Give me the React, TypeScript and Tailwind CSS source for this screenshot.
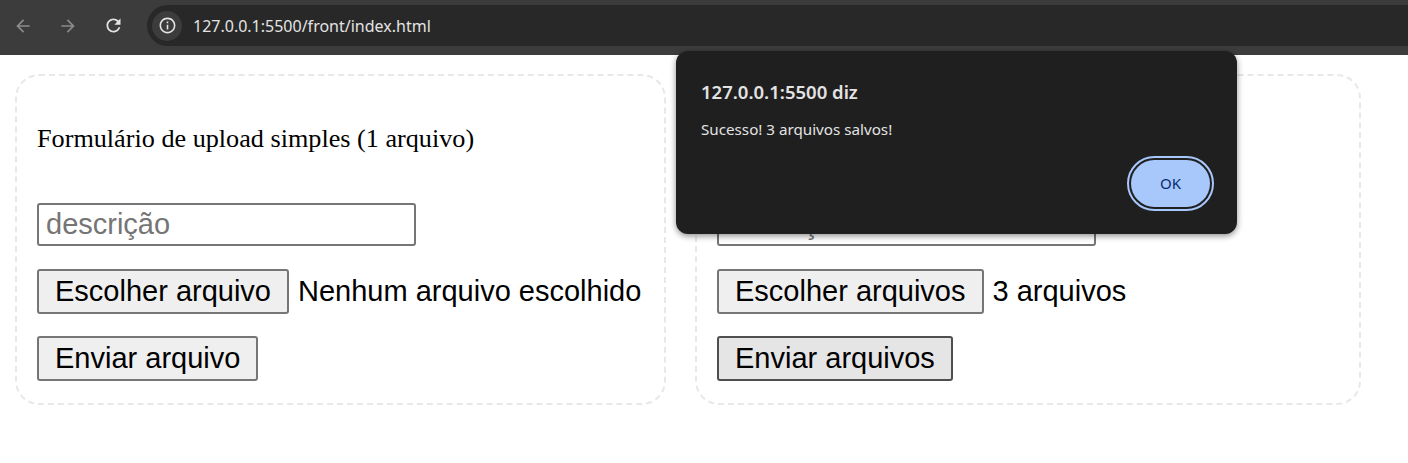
export default function App() {
  return (
    <div className="relative min-h-[463px] w-[1408px] overflow-hidden bg-white">
      {/* browser toolbar */}
      <div className="flex h-[55px] items-start bg-[#3c3c3c] pl-[5px] pt-[5px]">
        <div className="flex h-[41px] items-center gap-[9px]">
          <span className="flex h-[36px] w-[36px] items-center justify-center text-[#8b8b8b]">
            <svg width="20" height="20" viewBox="0 0 24 24" fill="currentColor">
              <path d="M20 11H7.83l5.59-5.59L12 4l-8 8 8 8 1.41-1.41L7.83 13H20v-2z" />
            </svg>
          </span>
          <span className="flex h-[36px] w-[36px] items-center justify-center text-[#8b8b8b]">
            <svg width="20" height="20" viewBox="0 0 24 24" fill="currentColor">
              <path d="M4 11h12.17l-5.59-5.59L12 4l8 8-8 8-1.41-1.41L16.17 13H4v-2z" />
            </svg>
          </span>
          <span className="flex h-[36px] w-[36px] items-center justify-center text-[#e3e3e3]">
            <svg width="21" height="21" viewBox="0 0 24 24" fill="currentColor">
              <path d="M17.65 6.35C16.2 4.9 14.21 4 12 4c-4.42 0-7.99 3.58-7.99 8s3.57 8 7.99 8c3.73 0 6.84-2.55 7.73-6h-2.08c-.82 2.33-3.04 4-5.65 4-3.31 0-6-2.69-6-6s2.69-6 6-6c1.66 0 3.14.69 4.22 1.78L13 11h7V4l-2.35 2.35z" />
            </svg>
          </span>
        </div>
        <div className="ml-[16px] flex h-[41px] flex-1 items-center rounded-l-full bg-[#282828] pl-[5px]">
          <span className="flex h-[30px] w-[30px] items-center justify-center rounded-full bg-[#3c3c3c] text-[#e3e3e3]">
            <svg width="19" height="19" viewBox="0 0 24 24" fill="currentColor">
              <path d="M11 7h2v2h-2zm0 4h2v6h-2zm1-9C6.48 2 2 6.48 2 12s4.48 10 10 10 10-4.48 10-10S17.52 2 12 2zm0 18c-4.41 0-8-3.59-8-8s3.59-8 8-8 8 3.59 8 8-3.59 8-8 8z" />
            </svg>
          </span>
          <span className="ml-[11px] font-['Noto_Sans',sans-serif] text-[16px] text-[#e3e3e3]">
            127.0.0.1:5500/front/index.html
          </span>
        </div>
      </div>

      {/* page */}
      <div className="flex items-start gap-[29px] pl-[15px] pt-[19px]">
        <UploadCard
          width="w-[651px]"
          title="Formulário de upload simples (1 arquivo)"
          chooseLabel="Escolher arquivo"
          status="Nenhum arquivo escolhido"
          submitLabel="Enviar arquivo"
        />
        <UploadCard
          width="w-[666px]"
          chooseLabel="Escolher arquivos"
          status="3 arquivos"
          submitLabel="Enviar arquivos"
          hovered
        />
      </div>

      {/* alert dialog */}
      <div className="absolute left-[676px] top-[51px] h-[183px] w-[561px] rounded-[12px] bg-[#1f1f1f] pl-[25px] pr-[23px] pt-[28px] font-['Noto_Sans',sans-serif] shadow-[0_2px_6px_rgba(0,0,0,0.45)]">
        <div className="text-[18.5px] font-semibold leading-[26px] text-[#e3e3e3]">127.0.0.1:5500 diz</div>
        <div className="mt-[14px] text-[15.2px] leading-[20px] text-[#e3e3e3]">Sucesso! 3 arquivos salvos!</div>
        <div className="mt-[17px] flex justify-end">
          <span className="rounded-full border-2 border-[#a8c7fa] p-[2px]">
            <span className="flex h-[47px] w-[79px] items-center justify-center rounded-full bg-[#a8c7fa] text-[15px] text-[#062e6f]">
              OK
            </span>
          </span>
        </div>
      </div>
    </div>
  );
}

function UploadCard(props: {
  width: string;
  title?: string;
  chooseLabel: string;
  status: string;
  submitLabel: string;
  hovered?: boolean;
}) {
  return (
    <div
      className={`${props.width} rounded-[24px] border-2 border-dashed border-[#e8e8e8] px-[20px] pb-[22px] pt-[48px]`}
    >
      <div className="h-[30px] font-['Liberation_Serif',serif] text-[26.2px] leading-[30px] text-black">{props.title}</div>
      <div className="mt-[49px] flex h-[43px] w-[379px] items-center rounded-[3px] border-2 border-[#767676] px-[7px] font-['Liberation_Sans',sans-serif] text-[29px] text-[#757575]">
        descrição
      </div>
      <div className="mt-[23px] flex items-center font-['Liberation_Sans',sans-serif] text-[29px] text-black">
        <span className="flex h-[45px] items-center rounded-[3px] border-2 border-[#767676] bg-[#efefef] px-[16px]">
          {props.chooseLabel}
        </span>
        <span className="ml-[9px]">{props.status}</span>
      </div>
      <div className="mt-[22px] flex font-['Liberation_Sans',sans-serif] text-[29px] text-black">
        <span
          className={`flex h-[45px] items-center rounded-[3px] border-2 px-[16px] ${
            props.hovered ? "border-[#4f4f4f] bg-[#e5e5e5]" : "border-[#767676] bg-[#efefef]"
          }`}
        >
          {props.submitLabel}
        </span>
      </div>
    </div>
  );
}
